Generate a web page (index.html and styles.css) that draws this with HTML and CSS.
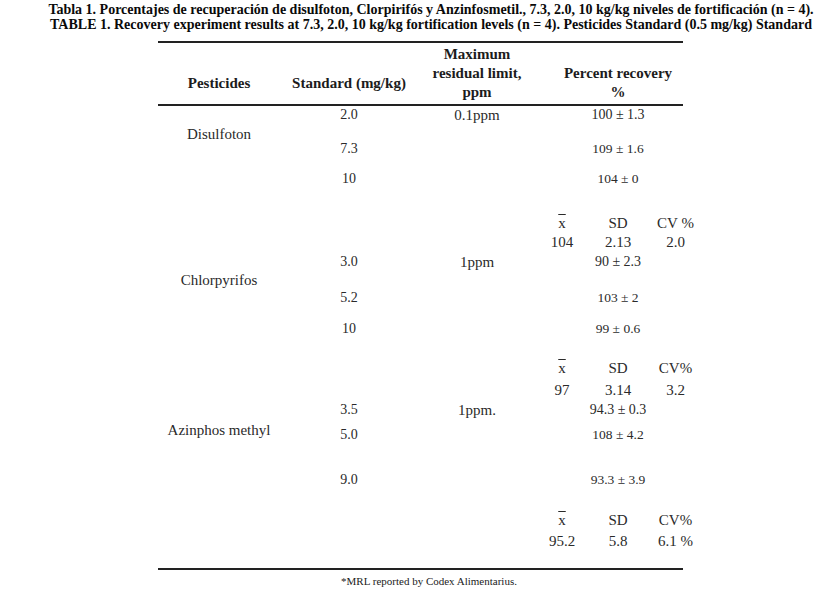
FILE: index.html
```html
<!DOCTYPE html>
<html lang="es">
<head>
<meta charset="utf-8">
<title>Tabla 1</title>
<link rel="stylesheet" href="styles.css">
</head>
<body>
<div class="page">
  <div class="title">
    <p>Tabla 1. Porcentajes de recuperación de disulfoton, Clorpirifós y Anzinfosmetil., 7.3, 2.0, 10 kg/kg niveles de fortificación (n = 4).</p>
    <p>TABLE 1. Recovery experiment results at 7.3, 2.0, 10 kg/kg fortification levels (n = 4). Pesticides Standard (0.5 mg/kg) Standard</p>
  </div>

  <div class="table">
    <div class="cols thead">
      <div class="c1 hmid">Pesticides</div>
      <div class="c2 hmid">Standard (mg/kg)</div>
      <div class="c3">Maximum<br>residual limit,<br>ppm</div>
      <div class="c4">Percent recovery<br>%</div>
    </div>

    <div class="tbody">
      <div class="cols line"><div class="c2 std">2.0</div><div class="c3 mrl">0.1ppm</div><div class="c4 rec">100 ± 1.3</div></div>
      <div class="cols line"><div class="c1 name">Disulfoton</div></div>
      <div class="cols line"><div class="c2 std">7.3</div><div class="c4 rec sm">109 ± 1.6</div></div>
      <div class="cols line"><div class="c2 std">10</div><div class="c4 rec sm">104 ± 0</div></div>
      <div class="cols line"><div class="stats"><span><span class="xbar">x</span></span><span>SD</span><span>CV %</span></div></div>
      <div class="cols line"><div class="stats"><span>104</span><span>2.13</span><span>2.0</span></div></div>
      <div class="cols line"><div class="c2 std">3.0</div><div class="c3 mrl">1ppm</div><div class="c4 rec">90 ± 2.3</div></div>
      <div class="cols line"><div class="c1 name">Chlorpyrifos</div></div>
      <div class="cols line"><div class="c2 std">5.2</div><div class="c4 rec sm">103 ± 2</div></div>
      <div class="cols line"><div class="c2 std">10</div><div class="c4 rec sm">99 ± 0.6</div></div>
      <div class="cols line"><div class="stats"><span><span class="xbar">x</span></span><span>SD</span><span>CV%</span></div></div>
      <div class="cols line"><div class="stats"><span>97</span><span>3.14</span><span>3.2</span></div></div>
      <div class="cols line"><div class="c2 std">3.5</div><div class="c3 mrl">1ppm.</div><div class="c4 rec">94.3 ± 0.3</div></div>
      <div class="cols line"><div class="c1 name">Azinphos methyl</div></div>
      <div class="cols line"><div class="c2 std">5.0</div><div class="c4 rec sm">108 ± 4.2</div></div>
      <div class="cols line"><div class="c2 std">9.0</div><div class="c4 rec sm">93.3 ± 3.9</div></div>
      <div class="cols line"><div class="stats"><span><span class="xbar">x</span></span><span>SD</span><span>CV%</span></div></div>
      <div class="cols line"><div class="stats"><span>95.2</span><span>5.8</span><span>6.1 %</span></div></div>
    </div>
  </div>

  <p class="note">*MRL reported by Codex Alimentarius.</p>
</div>
</body>
</html>
```

FILE: styles.css
```css
* { box-sizing: border-box; }

body {
  margin: 0;
  background: #ffffff;
  color: #2a2a2a;
  font-family: "Liberation Serif", "Times New Roman", serif;
}

.page { width: 833px; }

.title {
  padding: 2px 0 0 29px;
  text-align: center;
  font-weight: bold;
  font-size: 14px;
  line-height: 15px;
  letter-spacing: 0;
  color: #0a0a0a;
}

.title p { margin: 0; white-space: nowrap; }

.table {
  margin: 9px 0 0 158px;
  width: 525px;
}

.cols {
  display: grid;
  grid-template-columns: 122px 138px 118px 147px;
  text-align: center;
}

.c1 { grid-column: 1; }
.c2 { grid-column: 2; }
.c3 { grid-column: 3; }
.c4 { grid-column: 4; padding-left: 17px; }

.thead {
  height: 65px;
  border-top: 2px solid #222222;
  border-bottom: 2px solid #222222;
  padding-bottom: 2px;
  align-items: end;
  font-weight: bold;
  font-size: 15px;
  line-height: 19px;
  color: #1c1c1c;
}

.hmid { padding-bottom: 9px; }

.tbody {
  display: grid;
  grid-template-rows: 19px 15px 30px 44px 19px 20px 18px 18px 31px 39px 22px 20px 20px 5px 45px 40px 21px 36px;
  border-bottom: 2px solid #222222;
}

.line {
  line-height: 18px;
  align-items: start;
  white-space: nowrap;
}

.name { font-size: 15px; }
.std { font-size: 14px; }
.mrl { font-size: 15px; }
.rec { font-size: 14px; }
.rec.sm { font-size: 13.5px; }

.stats {
  grid-column: 4;
  display: grid;
  grid-template-columns: 52px 60px 55px;
  font-size: 15px;
}

.xbar {
  text-decoration: overline;
  text-decoration-thickness: 1px;
}

.note {
  margin: 4px 0 0 158px;
  width: 525px;
  padding-left: 17px;
  text-align: center;
  font-size: 11px;
  line-height: 14px;
  color: #222222;
}
```
